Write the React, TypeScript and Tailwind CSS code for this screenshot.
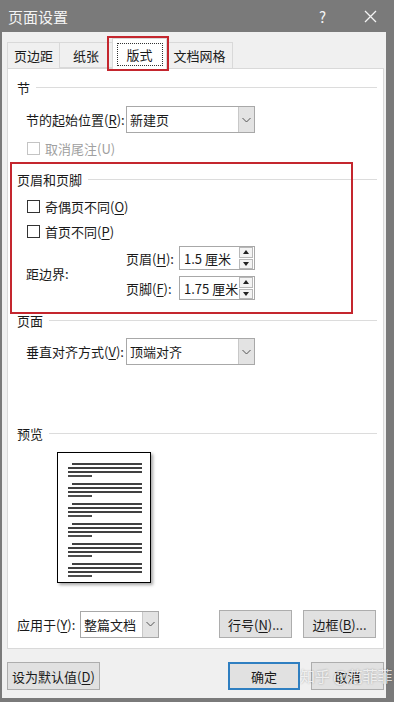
import * as React from 'react';

function U({ children }: { children: React.ReactNode }) {
  return <span className="underline underline-offset-2">{children}</span>;
}

function SectionHeader({ label }: { label: string }) {
  return (
    <div className="flex h-[20px] items-center pl-[9px] pr-[6px]">
      <span>{label}</span>
      <div className="ml-[6px] h-px flex-1 bg-[#dcdcdc]" />
    </div>
  );
}

function Chevron() {
  return (
    <svg width="9" height="6" viewBox="0 0 9 6" fill="none" stroke="#555" strokeWidth="1">
      <path d="M0.5 1l4 4 4-4" />
    </svg>
  );
}

function Select({ value, width }: { value: string; width: string }) {
  return (
    <div className={`flex h-[27px] ${width} border border-[#a8a8a8] bg-white`}>
      <div className="flex flex-1 items-center pl-[3px]">{value}</div>
      <div className="flex w-[16px] items-center justify-center border-l border-[#c8c8c8] bg-[#e3e3e3]">
        <Chevron />
      </div>
    </div>
  );
}

function Checkbox({ disabled }: { disabled?: boolean }) {
  return (
    <div
      className={`h-[13px] w-[13px] border bg-white ${disabled ? 'border-[#c4c4c4]' : 'border-[#333]'}`}
    />
  );
}

function Spin({ value }: { value: string }) {
  return (
    <div className="flex h-[24px] w-[76px] items-center border border-[#a8a8a8] bg-white pl-[4px] pr-[1px]">
      <span className="flex-1 whitespace-nowrap">{value}</span>
      <div className="flex h-[22px] w-[14px] flex-col gap-px">
        <div className="flex flex-1 items-center justify-center border border-[#b8b8b8] bg-[#f4f4f4]">
          <svg width="6" height="4" viewBox="0 0 6 4"><path d="M0 4L3 0L6 4Z" fill="#222" /></svg>
        </div>
        <div className="flex flex-1 items-center justify-center border border-[#b8b8b8] bg-[#f4f4f4]">
          <svg width="6" height="4" viewBox="0 0 6 4"><path d="M0 0L3 4L6 0Z" fill="#222" /></svg>
        </div>
      </div>
    </div>
  );
}

function Button({
  children,
  width,
  primary,
}: {
  children: React.ReactNode;
  width: string;
  primary?: boolean;
}) {
  return (
    <div
      className={`flex h-[28px] ${width} items-center justify-center bg-[#e1e1e1] ${
        primary ? 'border-2 border-[#2f7fc1]' : 'border border-[#adadad]'
      }`}
    >
      {children}
    </div>
  );
}

function PreviewPage() {
  const groups = [0, 1, 2, 3, 4, 5];
  return (
    <div className="h-[131px] w-[94px] border border-black bg-white shadow-[2px_2px_3px_rgba(0,0,0,0.35)]">
      <svg width="92" height="129" viewBox="0 0 92 129">
        {groups.map((g) => {
          const y = 11 + g * 20;
          return (
            <g key={g} stroke="#000" strokeWidth="1.4">
              <line x1="14" y1={y} x2="84" y2={y} />
              <line x1="10" y1={y + 4} x2="84" y2={y + 4} />
              <line x1="10" y1={y + 8} x2="84" y2={y + 8} />
              <line x1="10" y1={y + 12} x2="34" y2={y + 12} />
            </g>
          );
        })}
      </svg>
    </div>
  );
}

export default function App() {
  return (
    <div
      className="relative flex h-[702px] w-[394px] flex-col bg-[#7a7a7a] text-[13px] leading-none text-[#1a1a1a]"
      style={{ fontFamily: '"Noto Sans CJK SC", "Noto Sans", sans-serif' }}
    >
      {/* title bar */}
      <div className="flex h-[32px] items-center pl-[8px] text-[15px] text-[#f4f4f4]">
        <span className="flex-1">页面设置</span>
        <span className="mr-[38px] text-[15px]">?</span>
        <svg className="mr-[17px]" width="13" height="13" viewBox="0 0 13 13" stroke="#f4f4f4" strokeWidth="1.3">
          <path d="M1 1l11 11M12 1L1 12" />
        </svg>
      </div>

      {/* body */}
      <div className="ml-[2px] mr-[8px] mb-[4px] flex flex-1 flex-col bg-[#f0f0f0] pl-[5px] pr-[2px]">
        {/* tabs */}
        <div className="mt-[6px] flex h-[30px] items-end">
          <div className="flex h-[26px] w-[53px] items-center justify-center border border-b-0 border-[#d9d9d9]">页边距</div>
          <div className="flex h-[26px] w-[52px] items-center justify-center border-y border-[#d9d9d9]">纸张</div>
          <div className="relative z-10 -mb-px flex h-[31px] w-[55px] items-center justify-center border border-b-0 border-[#d9d9d9] bg-white">
            <div className="flex h-[23px] w-[46px] items-center justify-center border border-dotted border-[#333]">版式</div>
          </div>
          <div className="flex h-[26px] w-[66px] items-center justify-center border border-b-0 border-l-0 border-[#d9d9d9]">文档网格</div>
        </div>

        {/* panel */}
        <div className="flex h-[581px] flex-col border border-[#d9d9d9] bg-white">
          <div className="mt-[8px]">
            <SectionHeader label="节" />
          </div>
          <div className="mt-[9px] flex items-center pl-[18px]">
            <span className="w-[100px]">
              节的起始位置(<U>R</U>):
            </span>
            <Select value="新建页" width="w-[129px]" />
          </div>
          <div className="mt-[5px] flex h-[20px] items-center gap-[5px] pl-[19px] text-[#a0a0a0]">
            <Checkbox disabled />
            <span>取消尾注(U)</span>
          </div>

          <div className="mt-[11px]">
            <SectionHeader label="页眉和页脚" />
          </div>
          <div className="mt-[7px] flex h-[20px] items-center gap-[5px] pl-[19px]">
            <Checkbox />
            <span>
              奇偶页不同(<U>O</U>)
            </span>
          </div>
          <div className="mt-[5px] flex h-[20px] items-center gap-[5px] pl-[19px]">
            <Checkbox />
            <span>
              首页不同(<U>P</U>)
            </span>
          </div>
          <div className="mt-[5px] flex h-[54px] items-center pl-[18px]">
            <span className="w-[100px]">距边界:</span>
            <div className="flex flex-col gap-[6px]">
              <div className="flex items-center">
                <span className="w-[53px]">
                  页眉(<U>H</U>):
                </span>
                <Spin value="1.5 厘米" />
              </div>
              <div className="flex items-center">
                <span className="w-[53px]">
                  页脚(<U>F</U>):
                </span>
                <Spin value="1.75 厘米" />
              </div>
            </div>
          </div>

          <div className="mt-[10px]">
            <SectionHeader label="页面" />
          </div>
          <div className="mt-[8px] flex items-center pl-[18px]">
            <span className="w-[100px]">
              垂直对齐方式(<U>V</U>):
            </span>
            <Select value="顶端对齐" width="w-[129px]" />
          </div>

          <div className="mt-[58px]">
            <SectionHeader label="预览" />
          </div>
          <div className="mt-[9px] pl-[49px]">
            <PreviewPage />
          </div>

          <div className="mt-[27px] flex items-center pl-[9px] pr-[7px]">
            <span className="w-[63px]">
              应用于(<U>Y</U>):
            </span>
            <Select value="整篇文档" width="w-[79px]" />
            <div className="flex-1" />
            <Button width="w-[73px]">
              行号(<U>N</U>)...
            </Button>
            <div className="w-[11px]" />
            <Button width="w-[73px]">
              边框(<U>B</U>)...
            </Button>
          </div>
        </div>

        {/* footer */}
        <div className="mt-[13px] flex items-center">
          <Button width="w-[93px]">
            设为默认值(<U>D</U>)
          </Button>
          <div className="flex-1" />
          <Button width="w-[72px]" primary>
            确定
          </Button>
          <div className="w-[11px]" />
          <Button width="w-[73px]">取消</Button>
        </div>
      </div>

      {/* annotations */}
      <div className="pointer-events-none absolute left-[107px] top-[36px] h-[35px] w-[62px] border-2 border-[#c4262e]" />
      <div className="pointer-events-none absolute left-[10px] top-[162px] h-[152px] w-[343px] border-2 border-[#c4262e]" />
      <div className="pointer-events-none absolute left-[300px] top-[668px] whitespace-nowrap text-[15px] text-white/75 [text-shadow:0_0_2px_rgba(0,0,0,0.3)]">
        知乎 @范菲菲
      </div>
    </div>
  );
}
